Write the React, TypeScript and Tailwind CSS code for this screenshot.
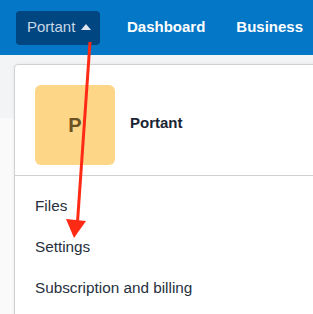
import React from 'react';

const font = { fontFamily: '"Liberation Sans", Arial, sans-serif' };

const menuItems = ['Files', 'Settings', 'Subscription and billing'];

const App: React.FC = () => {
  return (
    <div className="relative w-[313px] h-[314px] overflow-hidden bg-[#fafafa]" style={font}>
      {/* top nav */}
      <nav className="h-[55px] bg-[#0477c6] flex items-center pl-4">
        <button className="h-[34px] w-[84px] rounded-[4px] bg-[#004680] flex items-center pl-[11px] gap-[6px] text-[15px] text-[#c9d8e6]">
          Portant
          <span className="block w-0 h-0 border-l-[5px] border-r-[5px] border-b-[6px] border-l-transparent border-r-transparent border-b-[#dfe8f1] mb-[2px]" />
        </button>
        <a className="ml-[27px] text-[15px] font-bold text-white">Dashboard</a>
        <a className="ml-[31px] text-[15px] font-bold text-white">Business</a>
      </nav>
      <div className="h-[63px] bg-[#f3f4f5]" />

      {/* dropdown */}
      <div className="absolute left-[14px] top-[64px] w-[320px] h-[270px] bg-white border border-[#cfd2d5] rounded-tl-[4px] shadow-[0_0_4px_rgba(0,0,0,0.06)]">
        <div className="flex items-center pl-5 pt-5 pb-[10px] border-b border-[#cfd2d5]">
          <div className="w-20 h-20 rounded-[6px] bg-[#fdd687] flex items-center justify-center text-[20px] font-bold text-[#6a5224]">
            P
          </div>
          <div className="ml-[15px] mb-[3px] text-[15px] font-bold text-[#1a2433]">Portant</div>
        </div>
        <ul className="pt-[10px]">
          {menuItems.map(item => (
            <li key={item} className="h-[41px] flex items-center pl-5 text-[15.3px] text-[#26303d]">
              {item}
            </li>
          ))}
        </ul>
      </div>

      {/* annotation arrow */}
      <svg className="absolute left-0 top-0 pointer-events-none" width="313" height="314">
        <line x1="90" y1="42" x2="77.5" y2="222" stroke="#ff2a14" strokeWidth="3" />
        <polygon points="66,219 86,221 74,238" fill="#ff2a14" />
      </svg>
    </div>
  );
};

export default App;
